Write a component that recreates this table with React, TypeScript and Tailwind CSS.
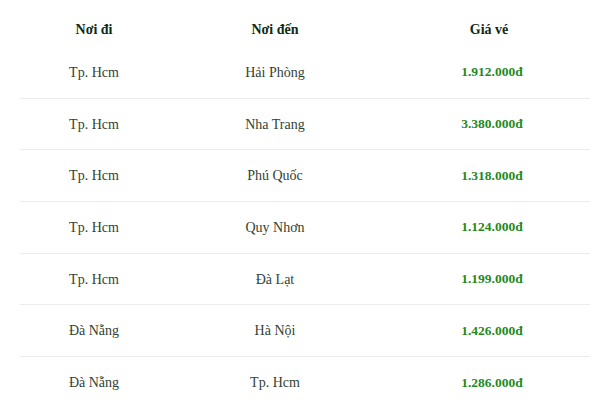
const routes = [
  { from: 'Tp. Hcm', to: 'Hải Phòng', price: '1.912.000đ' },
  { from: 'Tp. Hcm', to: 'Nha Trang', price: '3.380.000đ' },
  { from: 'Tp. Hcm', to: 'Phú Quốc', price: '1.318.000đ' },
  { from: 'Tp. Hcm', to: 'Quy Nhơn', price: '1.124.000đ' },
  { from: 'Tp. Hcm', to: 'Đà Lạt', price: '1.199.000đ' },
  { from: 'Đà Nẵng', to: 'Hà Nội', price: '1.426.000đ' },
  { from: 'Đà Nẵng', to: 'Tp. Hcm', price: '1.286.000đ' },
];

const cols = 'grid grid-cols-[148px_214px_208px] items-center text-center';

export default function App() {
  return (
    <div className="h-[400px] w-[600px] overflow-hidden bg-white font-['Liberation_Serif',serif] text-[14px]">
      <div className="mx-[20px] w-[570px]">
        <div className={`${cols} h-[47px] pt-[12px] font-bold text-[#0f2a12]`}>
          <div>Nơi đi</div>
          <div>Nơi đến</div>
          <div className="pl-[6px]">Giá vé</div>
        </div>
        {routes.map((r, i) => (
          <div
            key={i}
            className={`${cols} h-[51.7px] text-[#334233] ${
              i < routes.length - 1 ? 'border-b border-[#ececec]' : ''
            }`}
          >
            <div>{r.from}</div>
            <div>{r.to}</div>
            <div className="pl-[12px] text-[13.5px] font-bold text-[#1f8a1f]">{r.price}</div>
          </div>
        ))}
      </div>
    </div>
  );
}
